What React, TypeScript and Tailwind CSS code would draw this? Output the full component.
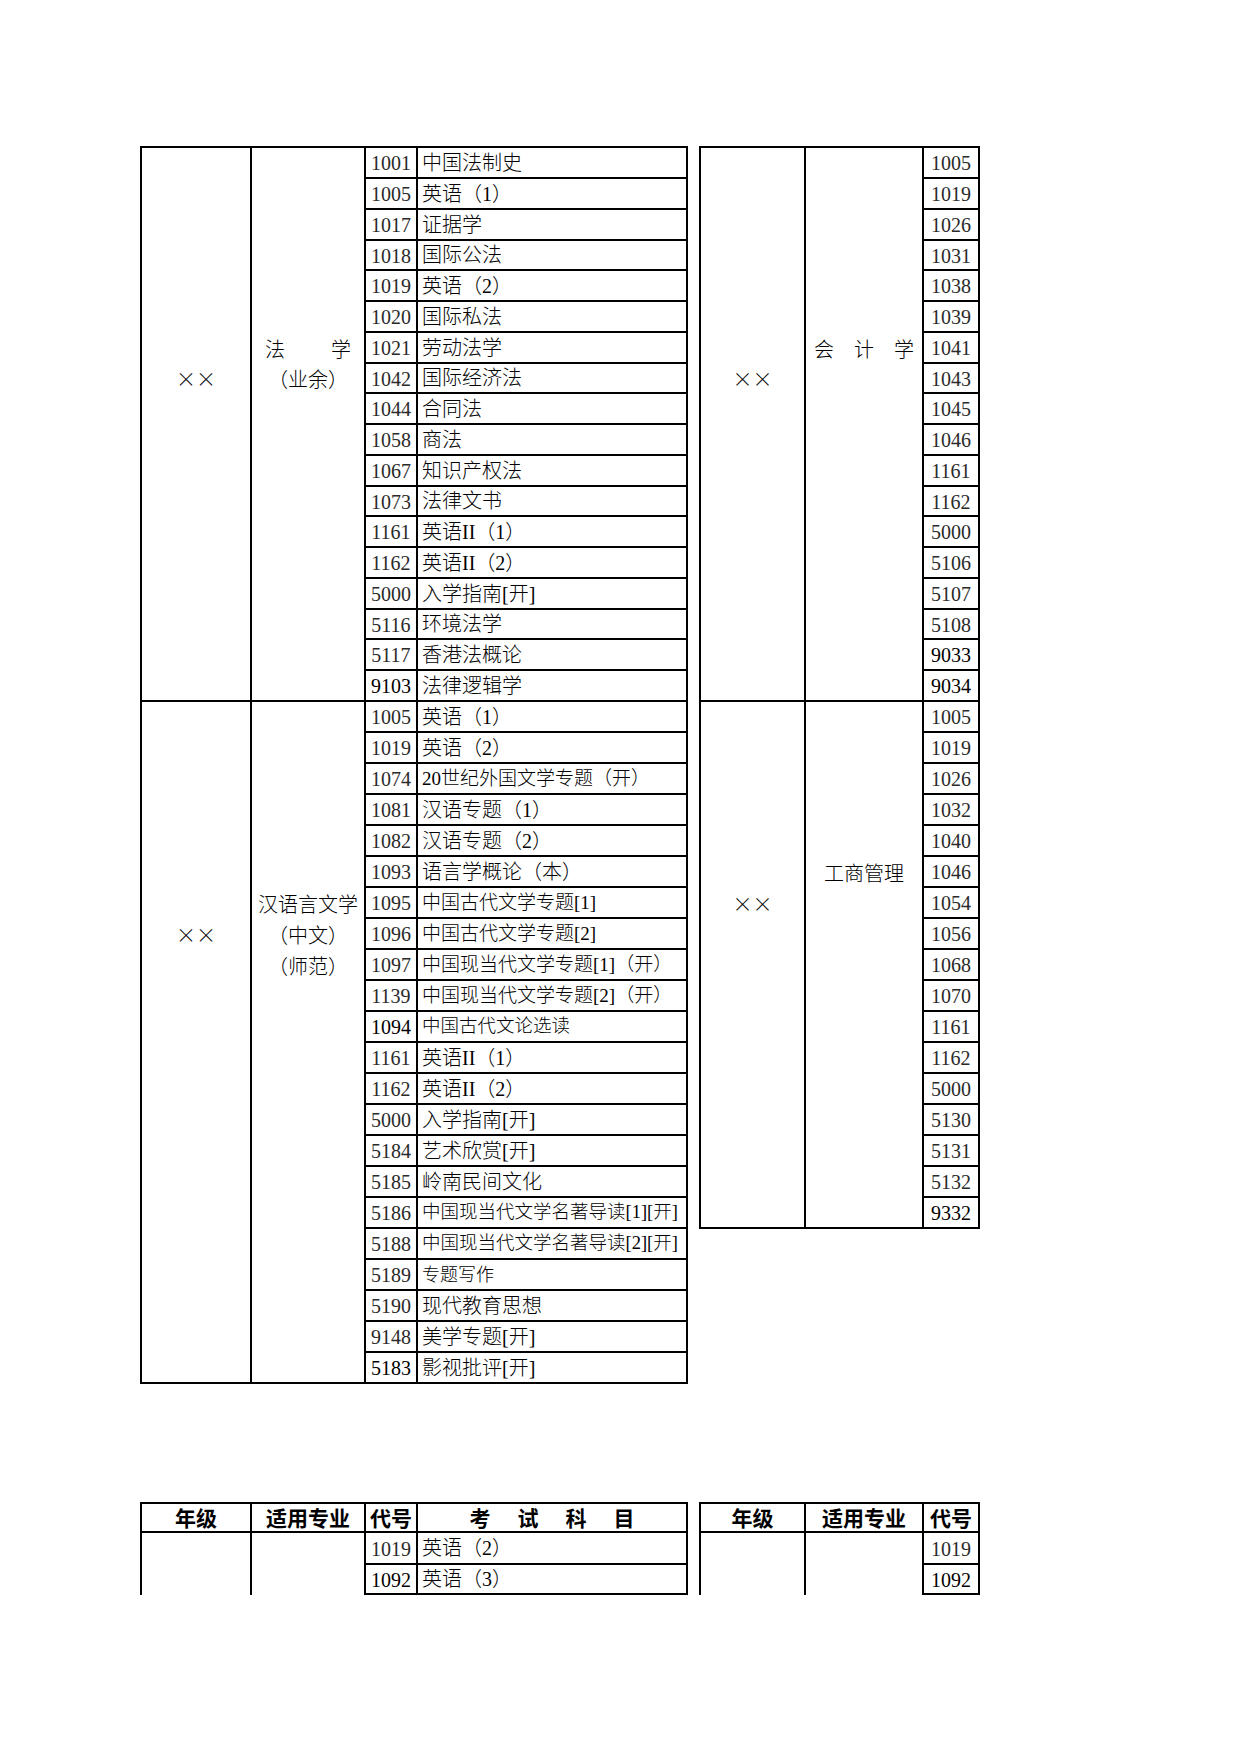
import type { ReactNode } from 'react'

const SERIF = "font-['Liberation_Serif','Noto_Sans_CJK_SC',serif]"
const CJK = "font-['Noto_Sans_CJK_SC',sans-serif]"

type Size = 'n' | 'm' | 's' | 'x'
type Row = { code: string; name?: string; size?: Size; dark?: boolean }

const sizeCls: Record<Size, string> = { n: 'text-[20px]', m: 'text-[19px]', s: 'text-[18.5px]', x: 'text-[18px]' }

const rowH = (h: number) => (h === 30 ? 'h-[30px]' : h === 32 ? 'h-[32px]' : h === 29 ? 'h-[29px]' : 'h-[31px]')

// 18 rows in the upper block: mostly 31px, every fourth 30px
const upper = Array.from({ length: 18 }, (_, i) => (i % 4 === 3 ? 30 : 31))
const lowerL = Array.from({ length: 22 }, () => 31)
const lowerR = Array.from({ length: 17 }, () => 31)

const lawRows: Row[] = [
  { code: '1001', name: '中国法制史' },
  { code: '1005', name: '英语（1）' },
  { code: '1017', name: '证据学' },
  { code: '1018', name: '国际公法' },
  { code: '1019', name: '英语（2）' },
  { code: '1020', name: '国际私法' },
  { code: '1021', name: '劳动法学' },
  { code: '1042', name: '国际经济法' },
  { code: '1044', name: '合同法' },
  { code: '1058', name: '商法' },
  { code: '1067', name: '知识产权法' },
  { code: '1073', name: '法律文书' },
  { code: '1161', name: '英语II（1）' },
  { code: '1162', name: '英语II（2）' },
  { code: '5000', name: '入学指南[开]' },
  { code: '5116', name: '环境法学' },
  { code: '5117', name: '香港法概论' },
  { code: '9103', name: '法律逻辑学', dark: true },
]

const chineseRows: Row[] = [
  { code: '1005', name: '英语（1）' },
  { code: '1019', name: '英语（2）' },
  { code: '1074', name: '20世纪外国文学专题（开）', size: 'm' },
  { code: '1081', name: '汉语专题（1）' },
  { code: '1082', name: '汉语专题（2）' },
  { code: '1093', name: '语言学概论（本）' },
  { code: '1095', name: '中国古代文学专题[1]', size: 'm' },
  { code: '1096', name: '中国古代文学专题[2]', size: 'm' },
  { code: '1097', name: '中国现当代文学专题[1]（开）', size: 'm' },
  { code: '1139', name: '中国现当代文学专题[2]（开）', size: 'm' },
  { code: '1094', name: '中国古代文论选读', size: 's', dark: true },
  { code: '1161', name: '英语II（1）' },
  { code: '1162', name: '英语II（2）' },
  { code: '5000', name: '入学指南[开]' },
  { code: '5184', name: '艺术欣赏[开]' },
  { code: '5185', name: '岭南民间文化' },
  { code: '5186', name: '中国现当代文学名著导读[1][开]', size: 's' },
  { code: '5188', name: '中国现当代文学名著导读[2][开]', size: 's' },
  { code: '5189', name: '专题写作', size: 'x' },
  { code: '5190', name: '现代教育思想' },
  { code: '9148', name: '美学专题[开]' },
  { code: '5183', name: '影视批评[开]', dark: true },
]

const codes = (list: string[], dark: string[]): Row[] => list.map((code) => ({ code, dark: dark.includes(code) }))

const accRows = codes(
  ['1005', '1019', '1026', '1031', '1038', '1039', '1041', '1043', '1045', '1046', '1161', '1162', '5000', '5106', '5107', '5108', '9033', '9034'],
  ['9033', '9034'],
)
const bizRows = codes(
  ['1005', '1019', '1026', '1032', '1040', '1046', '1054', '1056', '1068', '1070', '1161', '1162', '5000', '5130', '5131', '5132', '9332'],
  ['9332'],
)

// tall merged cell; labels sit in the slot of the row they belong to
function LabelCol({ width, heights, labels, bottom = true }: { width: string; heights: number[]; labels: Record<number, ReactNode>; bottom?: boolean }) {
  const last = heights.length - 1
  return (
    <div className={`${width} shrink-0 border-r-2 ${bottom ? 'border-b-2' : ''} border-black flex flex-col overflow-hidden`}>
      {heights.map((h, i) => (
        <div
          key={i}
          className={`${i === last ? 'flex-1' : `${rowH(h)} shrink-0`} flex items-center justify-center text-[20px] font-light leading-none ${CJK}`}
        >
          {labels[i]}
        </div>
      ))}
    </div>
  )
}

function CodeRows({ rows, heights, codeW, nameW }: { rows: Row[]; heights: number[]; codeW: string; nameW?: string }) {
  return (
    <div className="flex flex-col">
      {rows.map((r, i) => (
        <div key={i} className={`flex ${rowH(heights[i])}`}>
          <div
            className={`${codeW} border-r-2 border-b-2 border-black flex items-center justify-center pt-[1px] text-[20px] leading-none ${SERIF} ${r.dark ? 'text-black' : 'text-[#2a2a2a]'}`}
          >
            {r.code}
          </div>
          {nameW && (
            <div
              className={`${nameW} border-r-2 border-b-2 border-black flex items-center pl-[4px] font-light leading-none whitespace-nowrap ${SERIF} ${sizeCls[r.size ?? 'n']}`}
            >
              {r.name}
            </div>
          )}
        </div>
      ))}
    </div>
  )
}

const L = ['w-[110px]', 'w-[114px]', 'w-[52px]', 'w-[270px]']
const R = ['w-[105px]', 'w-[118px]', 'w-[56px]']

const spread = (chars: string[], pad: string) => (
  <div className={`w-full flex justify-between ${pad}`}>
    {chars.map((c) => (
      <span key={c}>{c}</span>
    ))}
  </div>
)

function HeaderRow({ widths, subject }: { widths: string[]; subject: boolean }) {
  const cell = `h-[29px] border-r-2 border-b-2 border-black flex items-center justify-center text-[21px] font-bold leading-none ${CJK}`
  return (
    <div className="flex">
      <div className={`${widths[0]} ${cell}`}>年级</div>
      <div className={`${widths[1]} ${cell}`}>适用专业</div>
      <div className={`${widths[2]} ${cell}`}>代号</div>
      {subject && (
        <div className={`${widths[3]} ${cell} gap-[27px]`}>
          <span>考</span>
          <span>试</span>
          <span>科</span>
          <span>目</span>
        </div>
      )}
    </div>
  )
}

export default function App() {
  const tail = [32, 30]
  return (
    <div className="w-[1240px] h-[1754px] bg-white text-black overflow-hidden">
      <div className="pt-[146px] pl-[140px] flex items-start gap-[11px]">
        {/* left table */}
        <div className="w-[548px] border-l-2 border-t-2 border-black">
          <div className="flex">
            <LabelCol width={L[0]} heights={upper} labels={{ 7: '××' }} />
            <LabelCol width={L[1]} heights={upper} labels={{ 6: spread(['法', '学'], 'px-[13px]'), 7: '（业余）' }} />
            <CodeRows rows={lawRows} heights={upper} codeW={L[2]} nameW={L[3]} />
          </div>
          <div className="flex">
            <LabelCol width={L[0]} heights={lowerL} labels={{ 7: '××' }} />
            <LabelCol width={L[1]} heights={lowerL} labels={{ 6: '汉语言文学', 7: '（中文）', 8: '（师范）' }} />
            <CodeRows rows={chineseRows} heights={lowerL} codeW={L[2]} nameW={L[3]} />
          </div>
        </div>

        {/* right table */}
        <div className="w-[281px] border-l-2 border-t-2 border-black">
          <div className="flex">
            <LabelCol width={R[0]} heights={upper} labels={{ 7: '××' }} />
            <LabelCol width={R[1]} heights={upper} labels={{ 6: spread(['会', '计', '学'], 'px-[8px]') }} />
            <CodeRows rows={accRows} heights={upper} codeW={R[2]} />
          </div>
          <div className="flex">
            <LabelCol width={R[0]} heights={lowerR} labels={{ 6: '××' }} />
            <LabelCol width={R[1]} heights={lowerR} labels={{ 5: '工商管理' }} />
            <CodeRows rows={bizRows} heights={lowerR} codeW={R[2]} />
          </div>
        </div>
      </div>

      <div className="mt-[118px] pl-[140px] flex items-start gap-[11px]">
        <div className="w-[548px] border-l-2 border-t-2 border-black">
          <HeaderRow widths={L} subject />
          <div className="flex">
            <LabelCol width={L[0]} heights={tail} labels={{}} bottom={false} />
            <LabelCol width={L[1]} heights={tail} labels={{}} bottom={false} />
            <CodeRows
              rows={[
                { code: '1019', name: '英语（2）' },
                { code: '1092', name: '英语（3）', dark: true },
              ]}
              heights={tail}
              codeW={L[2]}
              nameW={L[3]}
            />
          </div>
        </div>
        <div className="w-[281px] border-l-2 border-t-2 border-black">
          <HeaderRow widths={R} subject={false} />
          <div className="flex">
            <LabelCol width={R[0]} heights={tail} labels={{}} bottom={false} />
            <LabelCol width={R[1]} heights={tail} labels={{}} bottom={false} />
            <CodeRows rows={[{ code: '1019' }, { code: '1092', dark: true }]} heights={tail} codeW={R[2]} />
          </div>
        </div>
      </div>
    </div>
  )
}
